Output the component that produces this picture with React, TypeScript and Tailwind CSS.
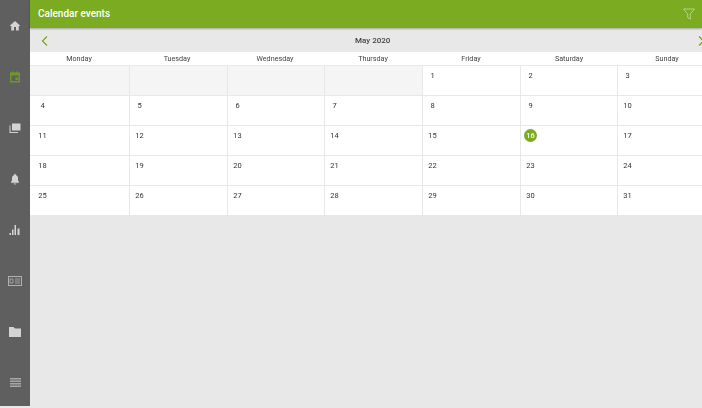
const weekdays = ['Monday', 'Tuesday', 'Wednesday', 'Thursday', 'Friday', 'Saturday', 'Sunday']

const days: (number | null)[] = [
  null, null, null, null,
  ...Array.from({ length: 31 }, (_, i) => i + 1),
]

const NavIcon = ({ d, active }: { d: string; active?: boolean }) => (
  <div className="flex h-[51px] shrink-0 items-center justify-center">
    <svg
      width="12"
      height="12"
      viewBox="0 0 24 24"
      className={active ? 'fill-[#6f9a22]' : 'fill-[#d4d4d4]'}
    >
      <path d={d} fillRule="evenodd" />
    </svg>
  </div>
)

const navIcons = [
  'M10 21v-7h4v7h5.5v-9H23L12 2 1 12h3.5v9z',
  'M2 3h4V1h3v2h6V1h3v2h4v20H2zm3 6v11h14V9zm8 4h5v5h-5z',
  'M6 3h17v14H6zM3 7v13h15v2H1V7z',
  'M12 23a3 3 0 0 0 3-2H9a3 3 0 0 0 3 2zm8-5-2-3V10c0-3-2-5.500-4.500-6.200V3a1.500 1.500 0 0 0-3 0v.8C8 4.500 6 7 6 10v5l-2 3v1.500h16z',
  'M11 2h3v20h-3zM17 9h4v13h-4zM6 11h3v11H6zM1 18h3v4H1z',
]

const App = () => {
  return (
    <div className="flex h-[408px] w-[702px] overflow-hidden bg-[#e8e8e8] font-['Roboto',sans-serif]">
      <aside className="flex h-[406px] w-[30px] shrink-0 flex-col overflow-hidden bg-[#5f5f5f]">
        {navIcons.map((d, i) => (
          <NavIcon key={d} d={d} active={i === 1} />
        ))}
        <div className="flex h-[51px] shrink-0 items-center justify-center">
          <svg width="14" height="10" viewBox="0 0 14 10" className="fill-none stroke-[#b0b0b0]">
            <rect x="0.5" y="0.5" width="13" height="9" />
            <path d="M2 3h3v4H2zM7 3h5M7 5h5M7 7h5" strokeWidth="0.8" />
          </svg>
        </div>
        <div className="flex h-[51px] shrink-0 items-center justify-center">
          <svg width="12" height="10" viewBox="0 0 12 10" className="fill-[#d4d4d4]">
            <path d="M0 0h4.500l1.500 1.500h6V10H0z" />
          </svg>
        </div>
        <div className="flex h-[51px] shrink-0 items-center justify-center">
          <svg width="11" height="9" viewBox="0 0 11 9" className="fill-[#a8a8a8]">
            <path d="M0 0h11v1.400H0zM0 2.500h11v1.400H0zM0 5h11v1.400H0zM0 7.500h11v1.400H0z" />
          </svg>
        </div>
      </aside>

      <main className="flex min-w-0 flex-1 flex-col">
        <header className="flex h-[28px] shrink-0 items-center justify-between bg-[#7aab20] pl-2 pr-[7px] shadow-[0_1px_2px_rgba(0,0,0,0.3)]">
          <h1 className="text-[10px] leading-none font-medium text-white">Calendar events</h1>
          <svg width="12" height="12" viewBox="0 0 12 12" className="fill-none stroke-[#c9dca5]">
            <path d="M0.500 1h11L7.300 6v5l-2.600-1.500V6z" strokeWidth="0.8" />
          </svg>
        </header>

        <div className="w-[686px]">
          <div className="flex h-[24px] items-center justify-between px-[11px] pt-[2px]">
            <svg width="8" height="10" viewBox="0 0 8 10" className="fill-none stroke-[#7aab20]">
              <path d="M6 0.500 1.500 5 6 9.500" strokeWidth="1.300" />
            </svg>
            <span className="text-[8px] font-medium text-[#444] will-change-transform">May 2020</span>
            <svg width="8" height="10" viewBox="0 0 8 10" className="fill-none stroke-[#7aab20]">
              <path d="M2 0.500 6.500 5 2 9.500" strokeWidth="1.300" />
            </svg>
          </div>

          <div className="grid h-[13px] grid-cols-7 bg-white">
            {weekdays.map((day) => (
              <div key={day} className="text-center text-[7.200px] leading-[13px] text-[#444] will-change-transform">
                {day}
              </div>
            ))}
          </div>

          <div className="grid grid-cols-[100px_98px_97px_98px_98px_97px_98px] border-b border-[#e8e8e8] bg-white">
            {days.map((day, i) => (
              <div
                key={i}
                className={`h-[30px] border-t border-r border-[#e8e8e8] pt-[3px] ${
                  i % 7 === 0 ? 'pl-[6px]' : 'pl-[3px]'
                } ${day === null ? 'bg-[#f5f5f5]' : 'bg-white'}`}
              >
                {day !== null && (
                  <span
                    className={`flex h-[13px] w-[13px] items-center justify-center rounded-full text-[7.500px] will-change-transform ${
                      day === 16 ? 'bg-[#7aab20] font-medium text-white' : 'text-[#333]'
                    }`}
                  >
                    {day}
                  </span>
                )}
              </div>
            ))}
          </div>
        </div>
      </main>
    </div>
  )
}

export default App
